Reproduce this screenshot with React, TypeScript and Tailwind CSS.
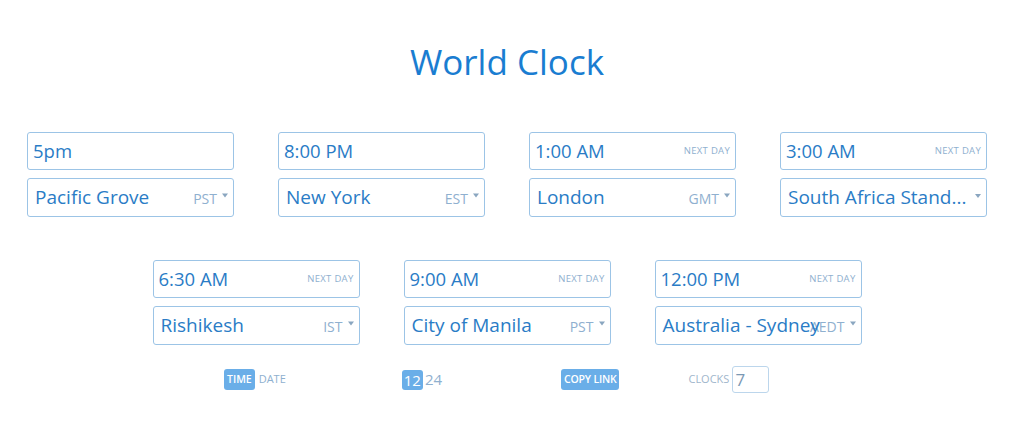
import React from 'react';

type Clock = { time: string; nextDay?: boolean; city: string; zone: string };

const topRow: Clock[] = [
  { time: '5pm', city: 'Pacific Grove', zone: 'PST' },
  { time: '8:00 PM', city: 'New York', zone: 'EST' },
  { time: '1:00 AM', nextDay: true, city: 'London', zone: 'GMT' },
  { time: '3:00 AM', nextDay: true, city: 'South Africa Stand...', zone: '' },
];

const bottomRow: Clock[] = [
  { time: '6:30 AM', nextDay: true, city: 'Rishikesh', zone: 'IST' },
  { time: '9:00 AM', nextDay: true, city: 'City of Manila', zone: 'PST' },
  { time: '12:00 PM', nextDay: true, city: 'Australia - Sydney', zone: 'AEDT' },
];

function Caret() {
  return <span className="ml-[5px] mb-[4px] inline-block border-x-[3px] border-t-[4px] border-x-transparent border-t-[#8aa6c0]" />;
}

function ClockCard({ c }: { c: Clock }) {
  return (
    <div className="flex w-[207px] flex-col gap-[8px]">
      <div className="flex h-[38px] items-center justify-between rounded-[3px] border border-[#9cc4e6] bg-white pl-[5px] pr-[5px]">
        <span className="text-[18.5px] text-[#2a7cc6]">{c.time}</span>
        {c.nextDay && <span className="text-[9.5px] uppercase tracking-[0.3px] text-[#8fb0cf]">Next Day</span>}
      </div>
      <div className="relative flex h-[39px] items-center rounded-[3px] border border-[#9cc4e6] bg-white pl-[7px] pr-[5px]">
        <span className="relative z-10 whitespace-nowrap text-[19px] text-[#2a7cc6]">{c.city}</span>
        <span className="absolute right-[5px] top-1/2 flex -translate-y-1/2 items-center text-[14px] text-[#8fb0cf]">
          {c.zone}
          <Caret />
        </span>
      </div>
    </div>
  );
}

export default function App() {
  return (
    <div className="min-h-[444px] w-full bg-white pr-[10px] font-['Open_Sans',sans-serif]">
      <h1 className="pt-[40px] text-center text-[35px] leading-[44px] text-[#1a7dd1]">World Clock</h1>
      <div className="mt-[48px] flex justify-center gap-[44px]">
        {topRow.map((c) => (
          <ClockCard key={c.city} c={c} />
        ))}
      </div>
      <div className="mt-[43px] flex justify-center gap-[44px]">
        {bottomRow.map((c) => (
          <ClockCard key={c.city} c={c} />
        ))}
      </div>
      <div className="mt-[21px] flex items-center text-[10px] uppercase">
        <div className="ml-[224px] flex items-center gap-[4px]">
          <span className="rounded-[3px] bg-[#6aaee8] px-[3px] py-[3px] text-[10.5px] font-semibold text-white">Time</span>
          <span className="text-[11px] text-[#8fb0cf]">Date</span>
        </div>
        <div className="ml-[116px] flex items-center gap-[2px] text-[15px]">
          <span className="rounded-[3px] bg-[#6aaee8] px-[2px] leading-[20px] text-white">12</span>
          <span className="text-[#8fb0cf]">24</span>
        </div>
        <span className="ml-[119px] rounded-[3px] bg-[#6aaee8] px-[3px] py-[3px] text-[10.5px] font-semibold tracking-[-0.2px] text-white">Copy Link</span>
        <div className="ml-[69px] flex items-center gap-[3px]">
          <span className="text-[11px] text-[#9fb6cc]">Clocks</span>
          <div className="flex h-[27px] w-[37px] items-center rounded-[3px] border border-[#bcd6ec] pl-[2px] text-[17px] text-[#7b98b4]">7</div>
        </div>
      </div>
    </div>
  );
}
